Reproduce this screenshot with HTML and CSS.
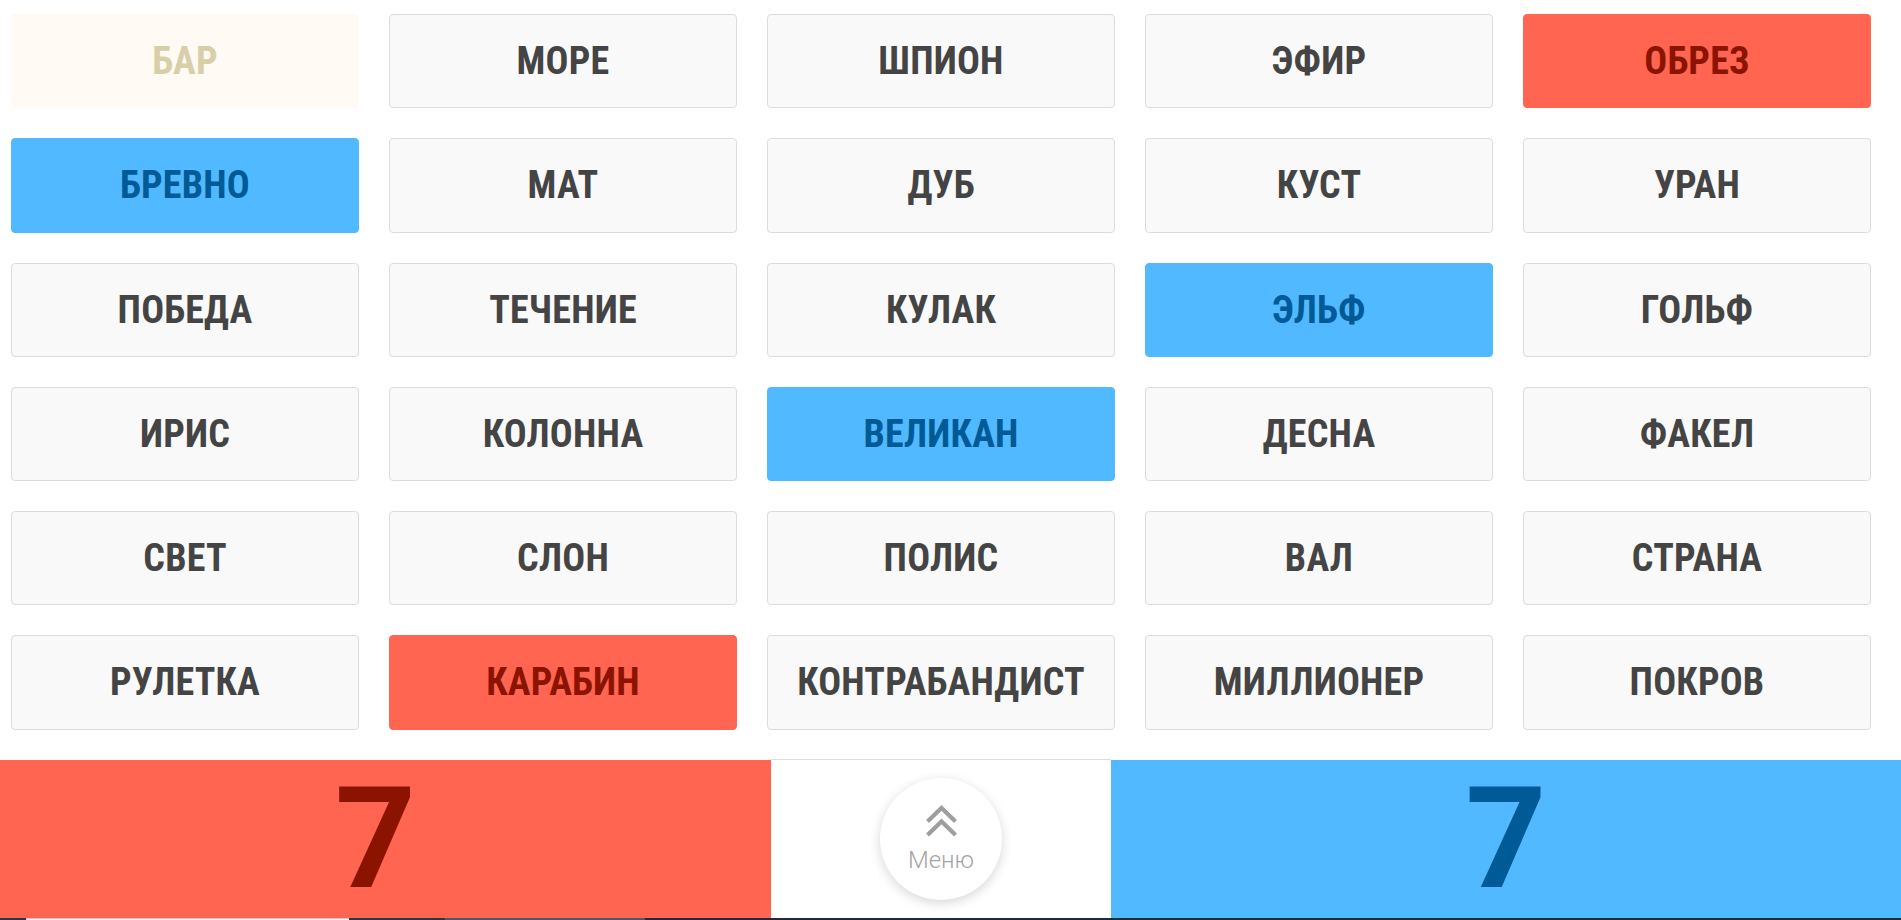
FILE: index.html
```html
<!DOCTYPE html>
<html lang="ru">
<head>
<meta charset="utf-8">
<title>Кодовые имена</title>
<link rel="stylesheet" href="styles.css">
</head>
<body>
<div class="page">
  <main class="board">
    <div class="card card-neutral">БАР</div>
    <div class="card">МОРЕ</div>
    <div class="card">ШПИОН</div>
    <div class="card">ЭФИР</div>
    <div class="card card-red">ОБРЕЗ</div>

    <div class="card card-blue">БРЕВНО</div>
    <div class="card">МАТ</div>
    <div class="card">ДУБ</div>
    <div class="card">КУСТ</div>
    <div class="card">УРАН</div>

    <div class="card">ПОБЕДА</div>
    <div class="card">ТЕЧЕНИЕ</div>
    <div class="card">КУЛАК</div>
    <div class="card card-blue">ЭЛЬФ</div>
    <div class="card">ГОЛЬФ</div>

    <div class="card">ИРИС</div>
    <div class="card">КОЛОННА</div>
    <div class="card card-blue">ВЕЛИКАН</div>
    <div class="card">ДЕСНА</div>
    <div class="card">ФАКЕЛ</div>

    <div class="card">СВЕТ</div>
    <div class="card">СЛОН</div>
    <div class="card">ПОЛИС</div>
    <div class="card">ВАЛ</div>
    <div class="card">СТРАНА</div>

    <div class="card">РУЛЕТКА</div>
    <div class="card card-red">КАРАБИН</div>
    <div class="card">КОНТРАБАНДИСТ</div>
    <div class="card">МИЛЛИОНЕР</div>
    <div class="card">ПОКРОВ</div>
  </main>

  <footer class="scorebar">
    <div class="score score-red">7</div>
    <div class="menu-cell">
      <button class="menu-btn" type="button">
        <svg class="menu-icon" width="33" height="33" viewBox="0 0 33 33" aria-hidden="true">
          <path d="M2.5 17.5 L16.5 4 L30.5 17.5" fill="none" stroke="#9e9e9e" stroke-width="4.2"/>
          <path d="M2.5 31 L16.5 17.5 L30.5 31" fill="none" stroke="#9e9e9e" stroke-width="4.2"/>
        </svg>
        <span class="menu-label">Меню</span>
      </button>
    </div>
    <div class="score score-blue">7</div>
  </footer>

  <div class="taskstrip">
    <span class="ts ts-dark ts-a"></span>
    <span class="ts ts-light ts-b"></span>
    <span class="ts ts-dark ts-c"></span>
    <span class="ts ts-grey ts-d"></span>
    <span class="ts ts-navy ts-e"></span>
  </div>
</div>
</body>
</html>
```

FILE: styles.css
```css
html, body {
  margin: 0;
  padding: 0;
  background: #ffffff;
}

.page {
  width: 1901px;
  height: 920px;
  display: flex;
  flex-direction: column;
  overflow: hidden;
}

.board {
  display: grid;
  grid-template-columns: repeat(5, 348px);
  grid-auto-rows: 94.25px;
  column-gap: 30px;
  row-gap: 30px;
  padding: 14px 30px 0 11px;
}

.card {
  box-sizing: border-box;
  display: flex;
  align-items: center;
  justify-content: center;
  background: #f9f9f9;
  border: 1px solid #dcdcdc;
  border-radius: 4px;
  color: #444444;
  font-family: "Roboto Condensed", "Liberation Sans Narrow", "DejaVu Sans Condensed", Roboto, sans-serif;
  font-weight: 700;
  font-size: 38px;
  letter-spacing: 0.2px;
  text-transform: uppercase;
}

.card-neutral {
  background: #fffaf3;
  border-color: #fffaf3;
  color: #d8cfa9;
}

.card-red {
  background: #ff6551;
  border-color: #ff6551;
  color: #8b1400;
}

.card-blue {
  background: #51b9ff;
  border-color: #51b9ff;
  color: #005a95;
}

.scorebar {
  margin-top: 29px;
  height: 159px;
  display: grid;
  grid-template-columns: 771px 340px 1fr;
  align-items: end;
}

.score {
  height: 158px;
  display: flex;
  align-items: center;
  justify-content: center;
  font-family: Roboto, "Liberation Sans", sans-serif;
  font-weight: 700;
  font-size: 141px;
  line-height: 1;
}

.score-red {
  background: #ff6551;
  color: #8b1400;
  padding-right: 20px;
}

.score-blue {
  background: #51b9ff;
  color: #005a95;
}

.menu-cell {
  box-sizing: border-box;
  height: 159px;
  border-top: 1px solid #dddddd;
  display: flex;
  align-items: center;
  justify-content: center;
  background: #ffffff;
}

.menu-btn {
  width: 122px;
  height: 122px;
  border-radius: 50%;
  border: none;
  background: #ffffff;
  box-shadow: 0 3px 12px rgba(0, 0, 0, 0.16);
  display: flex;
  flex-direction: column;
  align-items: center;
  justify-content: center;
  padding: 0;
  gap: 9px;
  margin-top: 1px;
}

.menu-icon {
  display: block;
}

.menu-label {
  font-family: Roboto, "Liberation Sans", sans-serif;
  font-weight: 300;
  font-size: 24px;
  line-height: 28px;
  color: #a3a3a3;
}

.taskstrip {
  height: 3px;
  flex: none;
  display: flex;
  background: #1d2b3b;
}

.ts {
  display: block;
  height: 3px;
}

.ts-dark { background: #243a45; }
.ts-light { background: #eeeeee; box-shadow: inset 1px 1px 0 #c8c8c8; }
.ts-grey { background: #4b5b63; }
.ts-navy { background: #1d2b3b; }

.ts-a { width: 26px; }
.ts-b { width: 323px; }
.ts-c { width: 96px; }
.ts-d { width: 200px; }
.ts-e { flex: 1; }
```
